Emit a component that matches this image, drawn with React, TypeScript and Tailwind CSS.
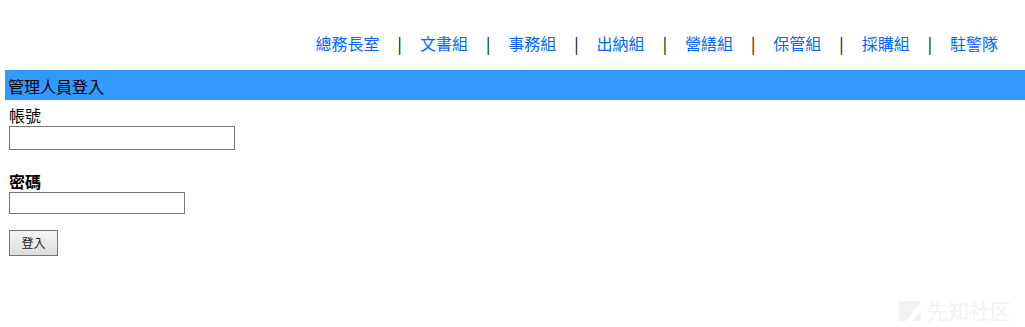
const links = ["總務長室", "文書組", "事務組", "出納組", "營繕組", "保管組", "採購組", "駐警隊"];

export default function App() {
  return (
    <div
      className="relative w-[1025px] h-[327px] overflow-hidden bg-white text-black"
      style={{ fontFamily: '"Noto Sans CJK TC", "Liberation Sans", sans-serif' }}
    >
      <div className="h-[70px] flex items-start justify-end pr-[27px] pt-[33px]">
        {links.map((name, i) => (
          <div key={name} className="flex items-center text-[16px] leading-[20px]">
            {i > 0 && <span className="mx-[18px] text-black">|</span>}
            <a href="#" className="text-[#0066ff]">
              {name}
            </a>
          </div>
        ))}
      </div>

      <div className="ml-[5px] h-[30px] bg-[#3399ff] pl-[3px] text-[16px] leading-[32px]">
        管理人員登入
      </div>

      <div className="px-[9px] text-[16px]">
        <div className="leading-[18px] mt-[6px]">帳號</div>
        <input
          type="text"
          className="block w-[226px] h-[24px] mt-[2px] border border-[#767676] bg-white"
        />
        <div className="leading-[18px] mt-[22px] font-bold">密碼</div>
        <input
          type="password"
          className="block w-[176px] h-[22px] mt-[2px] border border-[#767676] bg-white"
        />
        <button
          type="button"
          className="mt-[16px] w-[49px] h-[26px] border border-[#767676] bg-gradient-to-b from-[#f4f4f4] to-[#dddddd] text-[12px] text-[#222]"
        >
          登入
        </button>
      </div>

      <div className="absolute right-[14px] bottom-[6px] flex items-center gap-[6px] text-[#f2f2f2] text-[21px] leading-none">
        <svg width="22" height="20" viewBox="0 0 22 20">
          <polygon points="0,0 22,0 7,20 0,20" fill="#f2f2f2" />
          <polygon points="14,20 22,9 22,20" fill="#f2f2f2" />
        </svg>
        <span>先知社区</span>
      </div>
    </div>
  );
}
